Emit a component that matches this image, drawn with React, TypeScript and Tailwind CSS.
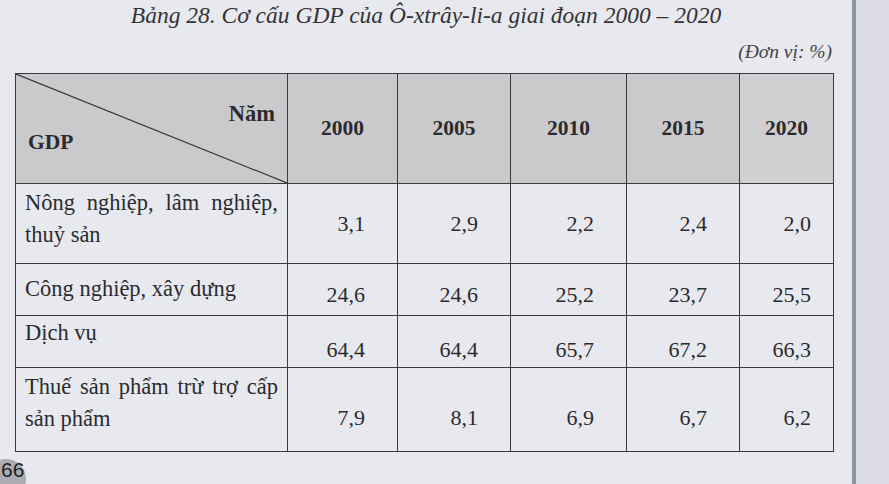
const years = ['2000', '2005', '2010', '2015', '2020']

type Row = {
  label: string[]
  values: string[]
  height: string
  labelPad: string
  valuePad: string
  align: string
}

const rows: Row[] = [
  {
    label: ['Nông nghiệp, lâm nghiệp,', 'thuỷ sản'],
    values: ['3,1', '2,9', '2,2', '2,4', '2,0'],
    height: 'h-[80px]',
    labelPad: 'pt-[3px]',
    valuePad: '',
    align: 'align-middle',
  },
  {
    label: ['Công nghiệp, xây dựng'],
    values: ['24,6', '24,6', '25,2', '23,7', '25,5'],
    height: 'h-[52px]',
    labelPad: 'pt-[9px]',
    valuePad: 'pt-[10px]',
    align: 'align-middle',
  },
  {
    label: ['Dịch vụ'],
    values: ['64,4', '64,4', '65,7', '67,2', '66,3'],
    height: 'h-[52px]',
    labelPad: 'pt-[1px]',
    valuePad: 'pb-[4px]',
    align: 'align-bottom',
  },
  {
    label: ['Thuế sản phẩm trừ trợ cấp', 'sản phẩm'],
    values: ['7,9', '8,1', '6,9', '6,7', '6,2'],
    height: 'h-[84px]',
    labelPad: 'pt-[3px]',
    valuePad: 'pb-[20px]',
    align: 'align-bottom',
  },
]

const widths = ['w-[272px]', 'w-[110px]', 'w-[113px]', 'w-[116px]', 'w-[113px]', 'w-[94px]']

export default function App() {
  return (
    <div className="flex h-[484px] w-[889px] overflow-hidden bg-[#dcdde6] font-['Liberation_Serif',serif] text-[#2b2b2e]">
      <div className="flex w-[852px] flex-col bg-[#e8e9ee]">
        <h1 className="text-center text-[23.5px] italic leading-[30px] text-[#333338]">
          Bảng 28. Cơ cấu GDP của Ô-xtrây-li-a giai đoạn 2000 – 2020
        </h1>
        <p className="mt-[9px] pr-[20px] text-right text-[19.5px] italic leading-[26px] text-[#444449]">
          (Đơn vị: %)
        </p>

        <table className="ml-[15px] mt-[8px] w-[817px] table-fixed border-collapse border-[1.5px] border-[#3a3a3e] font-['Liberation_Serif',serif] text-[22px] text-[#2b2b2e]">
          <colgroup>
            {widths.map((w, i) => (
              <col key={i} className={w} />
            ))}
          </colgroup>
          <thead>
            <tr className="h-[110px] bg-[#cacacd]">
              <th className="relative border-[1.5px] border-[#3a3a3e] p-0 text-left font-bold">
                <svg className="absolute inset-0 h-full w-full" preserveAspectRatio="none" viewBox="0 0 100 100">
                  <line x1="0" y1="0" x2="100" y2="100" stroke="#3a3a3e" strokeWidth="1.2" vectorEffect="non-scaling-stroke" />
                </svg>
                <div className="relative flex h-full flex-col justify-between pb-[10px] pl-[12px] pr-[12px] pt-[8px] font-['Liberation_Serif',serif] leading-[28px]">
                  <span className="self-end text-[22.5px]">Năm</span>
                  <span className="text-[21.5px]">GDP</span>
                </div>
              </th>
              {years.map((y, i) => (
                <th
                  key={y}
                  className={`border-[1.5px] border-[#3a3a3e] text-center font-['Liberation_Serif',serif] text-[21.5px] font-bold ${
                    i === 4 ? 'bg-[#d0d0d3]' : ''
                  }`}
                >
                  {y}
                </th>
              ))}
            </tr>
          </thead>
          <tbody>
            {rows.map((r) => (
              <tr key={r.label[0]} className={r.height}>
                <td className="border-[1.5px] border-[#3a3a3e] px-[9px] align-top font-['Liberation_Serif',serif] text-[22.5px] leading-[32px]">
                  <div className={r.labelPad}>
                    {r.label.map((l, i) => (
                      <div key={i} className={i === 0 && r.label.length > 1 ? 'text-justify [text-align-last:justify]' : ''}>
                        {l}
                      </div>
                    ))}
                  </div>
                </td>
                {r.values.map((v, i) => (
                  <td
                    key={i}
                    className={`border-[1.5px] border-[#3a3a3e] text-right font-['Liberation_Serif',serif] text-[22px] leading-[26px] ${r.align} ${r.valuePad} ${
                      i === 4 ? 'pr-[22px]' : 'pr-[32px]'
                    }`}
                  >
                    {v}
                  </td>
                ))}
              </tr>
            ))}
          </tbody>
        </table>

        <div className="relative mt-[7px] h-[22px] w-[40px]">
          <div className="absolute -left-[14px] top-[0px] h-[40px] w-[40px] rounded-full bg-[#acadb2]" />
          <span className="relative ml-[1px] block pt-[1px] font-['Liberation_Sans',sans-serif] text-[21px] leading-[20px] text-[#1e1e22]">
            66
          </span>
        </div>
      </div>
      <div className="w-[4px] bg-[#8d92a6]" />
      <div className="flex-1 bg-[#dadbe5]" />
    </div>
  )
}
